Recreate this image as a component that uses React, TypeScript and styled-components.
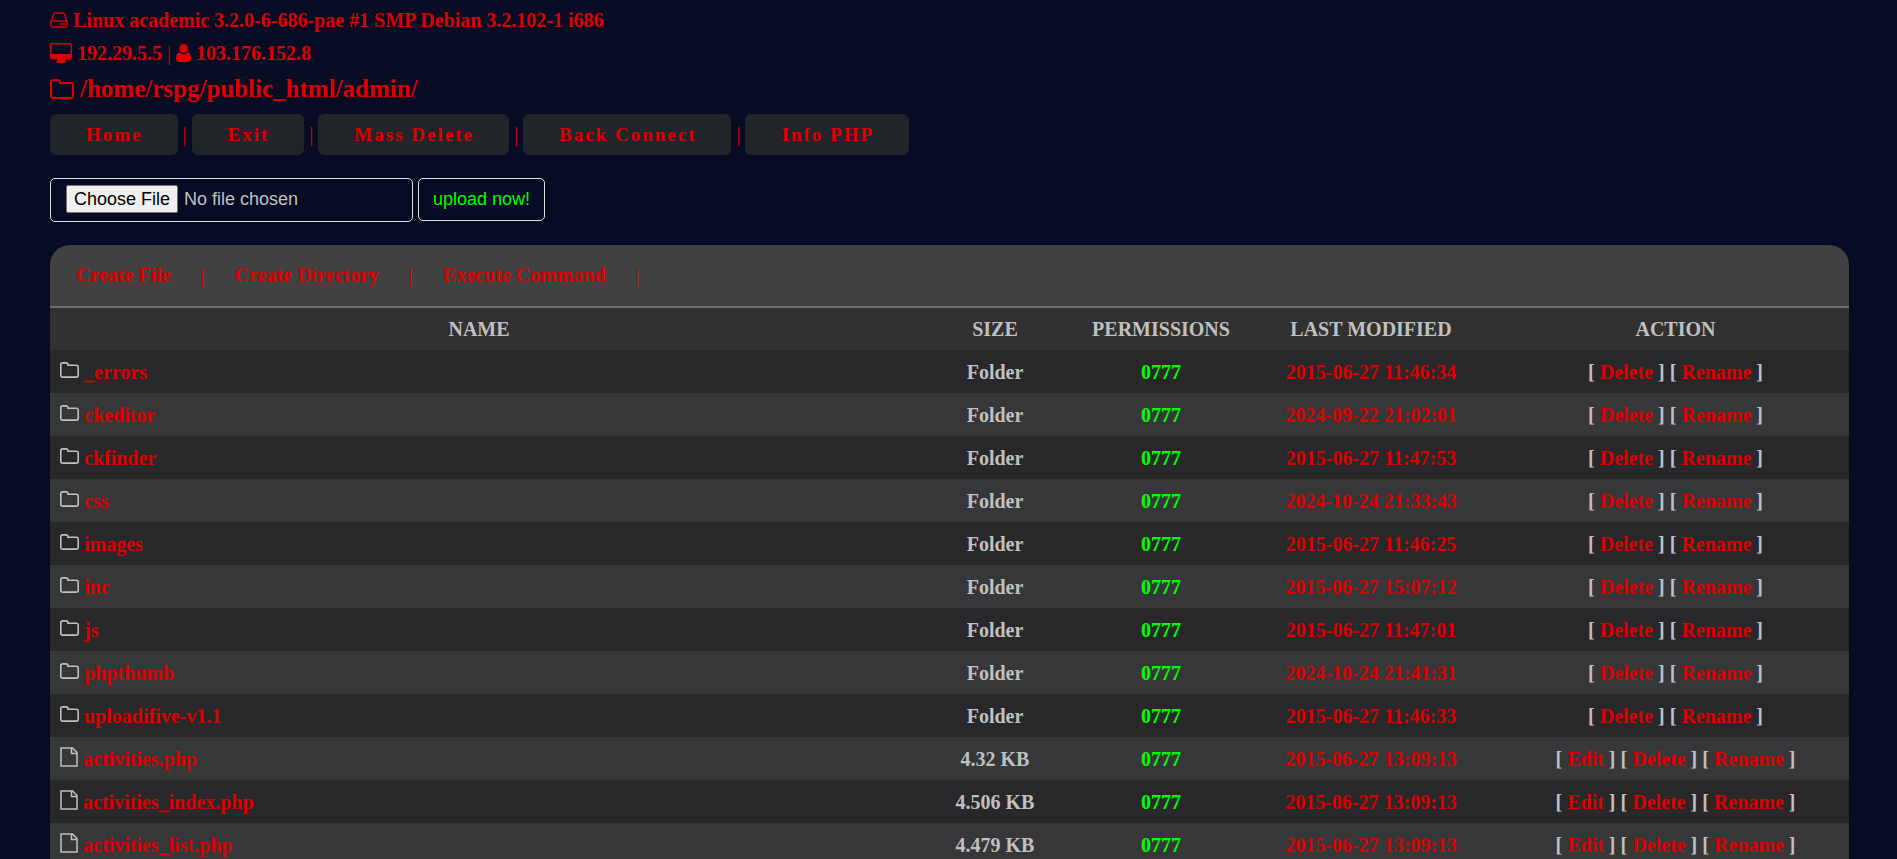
import React from 'react';
import styled, { createGlobalStyle } from 'styled-components';

const GlobalStyle = createGlobalStyle`
  * { box-sizing: border-box; }
  body {
    margin: 0;
    background: #070b24;
    color: #c0c0c0;
    font-family: "Liberation Serif", "Times New Roman", serif;
    font-size: 20px;
    line-height: 30px;
    font-weight: 700;
  }
  a { color: #dc0000; text-decoration: none; }
`;

const Page = styled.main`
  padding: 3px 48px 0 50px;
  overflow-x: hidden;
`;

const InfoLine = styled.div<{ $large?: boolean }>`
  display: flex;
  align-items: center;
  gap: ${(p) => (p.$large ? 6 : 5)}px;
  height: ${(p) => (p.$large ? 40 : 33)}px;
  color: #dc0000;
  font-size: ${(p) => (p.$large ? 25 : 20)}px;
`;

const Bar = styled.span`
  color: #dc0000;
  font-weight: 400;
`;

const Nav = styled.nav`
  display: flex;
  align-items: baseline;
  gap: 5px;
  margin-top: 5px;
`;

const NavLink = styled.a`
  display: block;
  padding: 6px 35px 5px 36px;
  border-radius: 6px;
  background: #212529;
  font-size: 19px;
  letter-spacing: 2px;
`;

const Upload = styled.form`
  display: flex;
  align-items: flex-start;
  gap: 5px;
  margin-top: 23px;
`;

const FileInput = styled.input`
  width: 363px;
  height: 44px;
  padding: 6px 15px;
  border: 1px solid #dee2e6;
  border-radius: 5px;
  color: #c0c0c0;
  font: 400 18px "Liberation Sans", Arial, sans-serif;
  &::file-selector-button {
    height: 28px;
    padding: 1px 7px;
    margin-right: 6px;
    border: 1px solid #767676;
    border-radius: 2px;
    background: #efefef;
    color: #000;
    font: inherit;
  }
`;

const UploadButton = styled.button`
  height: 43px;
  padding: 0 14px;
  border: 1px solid #dee2e6;
  border-radius: 5px;
  background: transparent;
  color: #00ff00;
  font: 400 18px "Liberation Sans", Arial, sans-serif;
`;

const Panel = styled.section`
  margin-top: 23px;
  border-radius: 20px 20px 0 0;
  overflow: hidden;
  background: #414141;
`;

const Tools = styled.div`
  display: flex;
  align-items: center;
  gap: 30px;
  padding: 15px 26px 16px;
`;

const Table = styled.table`
  width: 100%;
  border-collapse: collapse;
  border-top: 2px solid #6f6f6f;
  table-layout: fixed;
`;

const Row = styled.tr`
  height: 43px;
  background: #363739;
  &:nth-child(odd) { background: #28282a; }
`;

const HeadRow = styled.tr`
  height: 43px;
  background: #313131;
`;

const Head = styled.th<{ $width?: number }>`
  width: ${(p) => (p.$width ? `${p.$width}px` : 'auto')};
  padding: 0;
`;

const Cell = styled.td<{ $tone?: string }>`
  padding: 0;
  text-align: center;
  white-space: nowrap;
  color: ${(p) => p.$tone ?? 'inherit'};
`;

const NameCell = styled(Cell)`
  padding-left: 10px;
  text-align: left;
`;

const Icon = styled.svg`
  flex: none;
  display: block;
`;

const Entry = styled.div`
  display: flex;
  align-items: center;
  gap: 5px;
  ${Icon} { margin-bottom: 3px; }
`;

const HddIcon = () => (
  <Icon width="18" height="16" viewBox="0 0 18 16" fill="none" stroke="currentColor" strokeWidth="1.4">
    <path d="M1 9.5 3.6 2.2Q4 1 5.1 1h7.8q1.1 0 1.5 1.2L17 9.5v4.3q0 1.2-1.2 1.2H2.2Q1 15 1 13.8zM1.4 9h15.2" />
    <path d="M10 12h2M13 12h2" strokeWidth="2" />
  </Icon>
);

const DesktopIcon = () => (
  <Icon width="22" height="20" viewBox="0 0 22 20" fill="currentColor">
    <path fillRule="evenodd" d="M2 0h18q2 0 2 2v12.5q0 2-2 2h-5V18q1 .5 1 1.2-.1.8-1 .8H7q-1 0-1-.8T7 18v-1.500H2q-2 0-2-2V2q0-2 2-2zM2 1.400q-.6 0-.6.6v9h19.200V2q0-.6-.6-.6z" />
  </Icon>
);

const UserIcon = () => (
  <Icon width="15" height="18" viewBox="0 0 15 18" fill="currentColor">
    <ellipse cx="7.500" cy="4.500" rx="4.200" ry="4.500" />
    <path d="M3.300 8.300q1.700 1.900 4.200 1.900t4.200-1.900Q15 9 15 14.500 15 18 12 18H3q-3 0-3-3.500Q0 9 3.300 8.300z" />
  </Icon>
);

const FolderIcon = ({ large }: { large?: boolean }) => (
  <Icon width={large ? 24 : 19} height={large ? 20 : 16} viewBox="0 0 24 20" fill="none" stroke="currentColor" strokeWidth="2">
    <path d="M1 3.500Q1 1 3.500 1h4Q10 1 10 3.500V4h10.500Q23 4 23 6.500v10q0 2.500-2.500 2.500h-17Q1 19 1 16.500z" />
  </Icon>
);

const FileIcon = () => (
  <Icon width="18" height="20" viewBox="0 0 18 20" fill="none" stroke="currentColor" strokeWidth="1.500">
    <path d="M1 1H12.500L17 5.500V19H1zM11.500 1v5.500H17" />
  </Icon>
);

type Item = { name: string; size?: string; modified: string };

const items: Item[] = [
  { name: '_errors', modified: '2015-06-27 11:46:34' },
  { name: 'ckeditor', modified: '2024-09-22 21:02:01' },
  { name: 'ckfinder', modified: '2015-06-27 11:47:53' },
  { name: 'css', modified: '2024-10-24 21:33:43' },
  { name: 'images', modified: '2015-06-27 11:46:25' },
  { name: 'inc', modified: '2015-06-27 15:07:12' },
  { name: 'js', modified: '2015-06-27 11:47:01' },
  { name: 'phpthumb', modified: '2024-10-24 21:41:31' },
  { name: 'uploadifive-v1.1', modified: '2015-06-27 11:46:33' },
  { name: 'activities.php', size: '4.32 KB', modified: '2015-06-27 13:09:13' },
  { name: 'activities_index.php', size: '4.506 KB', modified: '2015-06-27 13:09:13' },
  { name: 'activities_list.php', size: '4.479 KB', modified: '2015-06-27 13:09:13' },
];

const navLinks = ['Home', 'Exit', 'Mass Delete', 'Back Connect', 'Info PHP'];
const tools = ['Create File', 'Create Directory', 'Execute Command'];

export default function App() {
  return (
    <Page>
      <GlobalStyle />
      <InfoLine><HddIcon />Linux academic 3.2.0-6-686-pae #1 SMP Debian 3.2.102-1 i686</InfoLine>
      <InfoLine><DesktopIcon />192.29.5.5 <Bar>|</Bar> <UserIcon />103.176.152.8</InfoLine>
      <InfoLine $large><FolderIcon large />/home/rspg/public_html/admin/</InfoLine>
      <Nav>
        {navLinks.map((label, i) => (
          <React.Fragment key={label}>
            {i > 0 && <Bar>|</Bar>}
            <NavLink href="#">{label}</NavLink>
          </React.Fragment>
        ))}
      </Nav>
      <Upload onSubmit={(e) => e.preventDefault()}>
        <FileInput type="file" aria-label="File to upload" />
        <UploadButton type="submit">upload now!</UploadButton>
      </Upload>
      <Panel>
        <Tools>
          {tools.map((label) => (
            <React.Fragment key={label}>
              <a href="#">{label}</a>
              <Bar>|</Bar>
            </React.Fragment>
          ))}
        </Tools>
        <Table>
          <thead>
            <HeadRow>
              <Head>NAME</Head>
              <Head $width={174}>SIZE</Head>
              <Head $width={158}>PERMISSIONS</Head>
              <Head $width={262}>LAST MODIFIED</Head>
              <Head $width={347}>ACTION</Head>
            </HeadRow>
          </thead>
          <tbody>
            {items.map((item) => (
              <Row key={item.name}>
                <NameCell>
                  <Entry>
                    {item.size ? <FileIcon /> : <FolderIcon />}
                    <a href="#">{item.name}</a>
                  </Entry>
                </NameCell>
                <Cell>{item.size ?? 'Folder'}</Cell>
                <Cell $tone="#00ff00">0777</Cell>
                <Cell $tone="#dc0000">{item.modified}</Cell>
                <Cell>
                  {item.size && <>[ <a href="#">Edit</a> ] </>}
                  [ <a href="#">Delete</a> ] [ <a href="#">Rename</a> ]
                </Cell>
              </Row>
            ))}
          </tbody>
        </Table>
      </Panel>
    </Page>
  );
}
